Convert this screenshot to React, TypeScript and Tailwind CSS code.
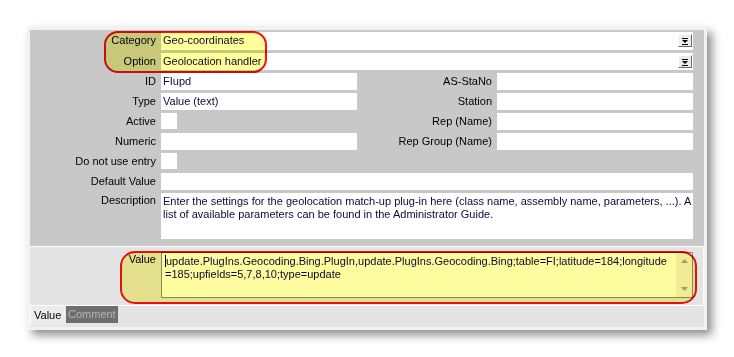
import React from "react";

const font = { fontFamily: '"Liberation Sans", Arial, sans-serif' };

function DropButton() {
  return (
    <div className="absolute right-[1px] top-[2px] w-[14px] h-[13px] bg-[#ececec] border border-t-white border-l-white border-r-[#6a6a6a] border-b-[#6a6a6a] flex items-center justify-center">
      <svg width="8" height="8" viewBox="0 0 8 8">
        <rect x="1" y="1" width="6" height="1" fill="#000" />
        <path d="M1 3 H7 L4 6 Z" fill="#000" />
        <rect x="1" y="7" width="6" height="1" fill="#000" />
      </svg>
    </div>
  );
}

function Field({ w, value, drop, h = "h-[17px]" }: { w: string; value?: string; drop?: boolean; h?: string }) {
  return (
    <div className={`relative bg-white ${w} ${h} pl-[2px] leading-[17px] text-[#0b0b3a] whitespace-nowrap`}>
      {value}
      {drop && <DropButton />}
    </div>
  );
}

function Row({ label, children, h = "h-[17px]" }: { label: string; children: React.ReactNode; h?: string }) {
  return (
    <div className={`flex items-start ${h}`}>
      <div className="w-[126px] text-right leading-[17px] text-black whitespace-nowrap">{label}</div>
      <div className="ml-[5px] flex">{children}</div>
    </div>
  );
}

function PairRow({ label, value, label2, value2 }: { label: string; value?: string; label2: string; value2?: string }) {
  return (
    <div className="flex items-start h-[17px]">
      <div className="w-[126px] text-right leading-[17px]">{label}</div>
      <div className="ml-[5px]">
        <Field w="w-[196px]" value={value} />
      </div>
      <div className="w-[135px] text-right leading-[17px] whitespace-nowrap">{label2}</div>
      <div className="ml-[5px]">
        <Field w="w-[196px]" value={value2} />
      </div>
    </div>
  );
}

export default function App() {
  return (
    <div className="w-[734px] h-[357px] bg-white overflow-hidden text-[11px]" style={font}>
      <div className="relative ml-[27px] mt-[27px] w-[680px] h-[303px] bg-[#f2f2f2] p-[3px] shadow-[5px_5px_9px_rgba(0,0,0,0.45)]">
        {/* upper panel */}
        <div className="h-[217px] bg-[#c8c8c8] pt-[2px] flex flex-col gap-[3px] border-b border-white">
          <Row label="Category" h="h-[18px]">
            <Field w="w-[532px]" value="Geo-coordinates" h="h-[18px]" drop />
          </Row>
          <Row label="Option">
            <Field w="w-[532px]" value="Geolocation handler" drop />
          </Row>
          <PairRow label="ID" value="FIupd" label2="AS-StaNo" />
          <PairRow label="Type" value="Value (text)" label2="Station" />
          <div className="flex items-start h-[17px]">
            <div className="w-[126px] text-right leading-[17px]">Active</div>
            <div className="ml-[5px] w-[16px] h-[16px] bg-white" />
            <div className="w-[315px] text-right leading-[17px]">Rep (Name)</div>
            <div className="ml-[5px]">
              <Field w="w-[196px]" />
            </div>
          </div>
          <PairRow label="Numeric" label2="Rep Group (Name)" />
          <Row label="Do not use entry">
            <div className="w-[16px] h-[16px] bg-white" />
          </Row>
          <Row label="Default Value">
            <Field w="w-[532px]" />
          </Row>
          <div className="flex items-start">
            <div className="w-[126px] text-right leading-[13px] pt-[1px]">Description</div>
            <div className="ml-[5px] w-[532px] h-[46px] bg-white pl-[2px] pt-[2px] leading-[13px] text-[#0b0b3a] whitespace-nowrap">
              Enter the settings for the geolocation match-up plug-in here (class name, assembly name, parameters, ...). A
              <br />
              list of available parameters can be found in the Administrator Guide.
            </div>
          </div>
        </div>

        {/* lower panel */}
        <div className="h-[80px] bg-[#e4e4e4]">
          <div className="h-[59px] border-r border-b border-white pt-[5px] flex items-start">
            <div className="w-[126px] text-right leading-[13px] pt-[1px]">Value</div>
            <div className="ml-[5px] w-[532px] h-[46px] bg-white border border-[#8a8a8a] flex">
              <div className="flex-1 pl-[3px] pt-[2px] leading-[13px] text-[#0b0b3a] whitespace-nowrap">
                <span className="inline-block w-[1px] h-[12px] bg-black align-[-2px]" />
                update.PlugIns.Geocoding.Bing.PlugIn,update.PlugIns.Geocoding.Bing;table=FI;latitude=184;longitude
                <br />
                =185;upfields=5,7,8,10;type=update
              </div>
              <div className="w-[16px] h-full bg-[#f0f0f0] flex flex-col items-center justify-between py-[6px]">
                <svg width="7" height="4" viewBox="0 0 7 4"><path d="M0 4 L3.5 0 L7 4 Z" fill="#a0a0a0" /></svg>
                <svg width="7" height="4" viewBox="0 0 7 4"><path d="M0 0 L3.5 4 L7 0 Z" fill="#a0a0a0" /></svg>
              </div>
            </div>
          </div>
          <div className="flex items-start">
            <div className="w-[36px] h-[19px] bg-[#ececec] border-l border-white pl-[3px] leading-[19px] text-black">Value</div>
            <div className="h-[17px] bg-[#6e6e6e] text-[#b4b4b4] leading-[17px] px-[2px] whitespace-nowrap">Comment</div>
          </div>
        </div>

        {/* highlights */}
        <div className="absolute left-[77px] top-[4px] w-[163px] h-[42px] rounded-[14px] border-2 border-[#ff1010] bg-[#ffff9c] mix-blend-multiply" />
        <div className="absolute left-[93px] top-[224px] w-[577px] h-[53px] rounded-[15px] border-2 border-[#ff1010] bg-[#fffb9f] mix-blend-multiply" />
      </div>
    </div>
  );
}
